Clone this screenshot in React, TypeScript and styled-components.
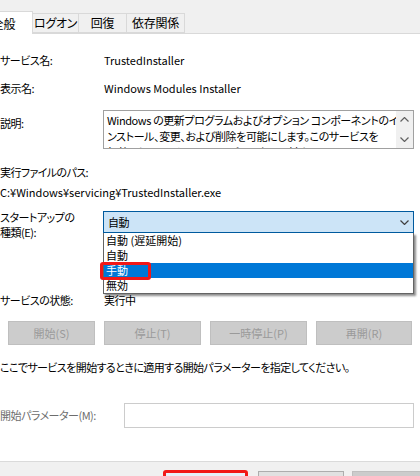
import React from "react";
import styled, { createGlobalStyle } from "styled-components";

const GlobalStyle = createGlobalStyle`
  html, body {
    margin: 0;
    padding: 0;
    background: #fff;
  }
  body {
    width: 420px;
    height: 476px;
    overflow: hidden;
    font-family: "Noto Sans CJK JP", "Noto Sans", sans-serif;
    font-size: 11px;
    letter-spacing: -0.5px;
    color: #000;
    font-feature-settings: "palt";
  }
`;

const Dialog = styled.div`
  width: 420px;
  height: 476px;
  display: flex;
  flex-direction: column;
  overflow: hidden;
`;

const TabStrip = styled.div`
  height: 33px;
  flex: 0 0 auto;
  display: flex;
  align-items: flex-end;
  background: #f0f0f0;
  border-bottom: 1px solid #d9d9d9;
`;

const Tab = styled.div<{ $w: number; $active?: boolean }>`
  box-sizing: border-box;
  width: ${(p) => p.$w}px;
  height: ${(p) => (p.$active ? 23 : 20)}px;
  margin-bottom: ${(p) => (p.$active ? -1 : 0)}px;
  margin-left: ${(p) => (p.$active ? -26 : -1)}px;
  border: 1px solid #d9d9d9;
  border-bottom: ${(p) => (p.$active ? "none" : "1px solid #d9d9d9")};
  background: ${(p) => (p.$active ? "#fff" : "#f0f0f0")};
  position: relative;
  z-index: ${(p) => (p.$active ? 1 : 0)};
  display: flex;
  align-items: center;
  justify-content: center;
  line-height: 16px;
  padding-top: ${(p) => (p.$active ? 1 : 0)}px;
  font-size: 12px;
  letter-spacing: -0.3px;
  white-space: nowrap;
`;

const Content = styled.div`
  flex: 1;
  display: flex;
  flex-direction: column;
`;

const Row = styled.div<{ $mt: number }>`
  display: flex;
  align-items: flex-start;
  margin-top: ${(p) => p.$mt}px;
  position: relative;
`;

const Label = styled.div<{ $w?: number; $mt?: number; $muted?: boolean }>`
  width: ${(p) => p.$w ?? 103}px;
  flex-shrink: 0;
  margin-top: ${(p) => p.$mt ?? 0}px;
  line-height: 16px;
  white-space: nowrap;
  color: ${(p) => (p.$muted ? "#6d6d6d" : "#000")};
`;

const TwoLineLabel = styled(Label)`
  line-height: 15px;
`;

const Value = styled.div<{ $latin?: boolean }>`
  padding-left: 1px;
  line-height: 16px;
  white-space: nowrap;
  letter-spacing: ${(p) => (p.$latin ? 0 : -0.5)}px;
`;

const Line = styled.div<{ $mt: number; $latin?: boolean }>`
  margin-top: ${(p) => p.$mt}px;
  line-height: 16px;
  white-space: nowrap;
  letter-spacing: ${(p) => (p.$latin ? 0 : -0.6)}px;
`;

const DescBox = styled.div`
  box-sizing: border-box;
  width: 311px;
  height: 39px;
  border: 1px solid #a0a0a0;
  display: flex;
  overflow: hidden;
`;

const DescText = styled.div`
  flex: 1;
  padding: 1px 0 0 3px;
  line-height: 16px;
  letter-spacing: -0.4px;
  white-space: nowrap;
  overflow: hidden;
`;

const ScrollBar = styled.div`
  width: 17px;
  flex-shrink: 0;
  background: #f0f0f0;
  display: flex;
  flex-direction: column;
  justify-content: space-between;
`;

const ScrollArrow = styled.div`
  height: 17px;
  display: flex;
  align-items: center;
  justify-content: center;
`;

const SelectWrap = styled.div`
  position: relative;
  margin-top: 1px;
`;

const Select = styled.div`
  box-sizing: border-box;
  width: 311px;
  height: 22px;
  border: 1px solid #005a9e;
  background: #cce4f7;
  display: flex;
  align-items: center;
  justify-content: space-between;
  padding: 0 4px 0 4px;
  line-height: 20px;
`;

const DropList = styled.div`
  position: absolute;
  top: 22px;
  left: 0;
  z-index: 5;
  box-sizing: border-box;
  width: 311px;
  border: 1px solid #646464;
  border-top: none;
  background: #fff;
  box-shadow: 2px 2px 2px rgba(0, 0, 0, 0.45);
`;

const Option = styled.div<{ $selected?: boolean }>`
  position: relative;
  height: 15px;
  line-height: 15px;
  padding-left: 2px;
  letter-spacing: 0;
  white-space: nowrap;
  background: ${(p) => (p.$selected ? "#0078d7" : "transparent")};
  color: ${(p) => (p.$selected ? "#fff" : "#000")};
`;

const Marker = styled.div`
  position: absolute;
  left: -4px;
  top: -1px;
  width: 51px;
  height: 18px;
  box-sizing: border-box;
  border: 3px solid #f21818;
  border-radius: 3px;
`;

const ButtonRow = styled.div`
  display: flex;
  margin-top: 13px;
  margin-left: 8px;
  gap: 9px;
`;

const ServiceButton = styled.div<{ $w: number }>`
  box-sizing: border-box;
  width: ${(p) => p.$w}px;
  height: 24px;
  border: 1px solid #bfbfbf;
  background: #cccccc;
  color: #9a9a9a;
  display: flex;
  align-items: center;
  justify-content: center;
  letter-spacing: 0;
  white-space: nowrap;
`;

const ParamInput = styled.div`
  box-sizing: border-box;
  width: 290px;
  height: 25px;
  border: 1px solid #cccccc;
  background: #fff;
`;

const Footer = styled.div`
  flex: 0 0 15px;
  box-sizing: border-box;
  border-top: 1px solid #dadada;
  background: #f0f0f0;
  display: flex;
  align-items: flex-start;
  padding: 8px 0 0 163px;
  overflow: hidden;
`;

const FooterButton = styled.div<{ $variant: "marked" | "normal" | "disabled" }>`
  box-sizing: border-box;
  flex-shrink: 0;
  height: 28px;
  width: ${(p) => (p.$variant === "marked" ? 85 : 86)}px;
  margin-left: ${(p) =>
    p.$variant === "marked" ? 0 : p.$variant === "normal" ? 10 : 8}px;
  margin-top: ${(p) => (p.$variant === "marked" ? 0 : 1)}px;
  border: ${(p) =>
    p.$variant === "marked"
      ? "3px solid #f21818"
      : p.$variant === "normal"
      ? "1px solid #adadad"
      : "1px solid #bfbfbf"};
  border-radius: ${(p) => (p.$variant === "marked" ? 3 : 0)}px;
  background: ${(p) =>
    p.$variant === "disabled" ? "#cccccc" : p.$variant === "normal" ? "#e1e1e1" : "#e5f1fb"};
`;

const Chevron: React.FC<{ up?: boolean; color?: string }> = ({ up, color = "#606060" }) => (
  <svg width="9" height="5" viewBox="0 0 9 5">
    <polyline
      points={up ? "0.5,4.5 4.5,0.5 8.5,4.5" : "0.5,0.5 4.5,4.5 8.5,0.5"}
      fill="none"
      stroke={color}
      strokeWidth="1.2"
    />
  </svg>
);

const startupTypes = ["自動 (遅延開始)", "自動", "手動", "無効"];

const App: React.FC = () => {
  return (
    <>
      <GlobalStyle />
      <Dialog>
        <TabStrip>
          <Tab $w={59} $active>
            全般
          </Tab>
          <Tab $w={47}>ログオン</Tab>
          <Tab $w={49}>回復</Tab>
          <Tab $w={59}>依存関係</Tab>
        </TabStrip>

        <Content>
          <Row $mt={18}>
            <Label>サービス名:</Label>
            <Value $latin>TrustedInstaller</Value>
          </Row>
          <Row $mt={12}>
            <Label>表示名:</Label>
            <Value $latin>Windows Modules Installer</Value>
          </Row>
          <Row $mt={14}>
            <Label $mt={5}>説明:</Label>
            <DescBox>
              <DescText>
                Windows の更新プログラムおよびオプション コンポーネントのイ
                <br />
                ンストール、変更、および削除を可能にします。このサービスを
                <br />
                無効にしていると、このコンピューターに対する Windows
              </DescText>
              <ScrollBar>
                <ScrollArrow>
                  <Chevron up />
                </ScrollArrow>
                <ScrollArrow>
                  <Chevron />
                </ScrollArrow>
              </ScrollBar>
            </DescBox>
          </Row>
          <Line $mt={15}>実行ファイルのパス:</Line>
          <Line $mt={4} $latin>
            C:¥Windows¥servicing¥TrustedInstaller.exe
          </Line>

          <Row $mt={10}>
            <TwoLineLabel>
              スタートアップの
              <br />
              種類(E):
            </TwoLineLabel>
            <SelectWrap>
              <Select>
                <span>自動</span>
                <Chevron color="#404040" />
              </Select>
              <DropList>
                {startupTypes.map((t) => (
                  <Option key={t} $selected={t === "手動"}>
                    {t}
                    {t === "手動" && <Marker />}
                  </Option>
                ))}
              </DropList>
            </SelectWrap>
          </Row>

          <Row $mt={52}>
            <Label>サービスの状態:</Label>
            <Value>実行中</Value>
          </Row>

          <ButtonRow>
            <ServiceButton $w={87}>開始(S)</ServiceButton>
            <ServiceButton $w={97}>停止(T)</ServiceButton>
            <ServiceButton $w={97}>一時停止(P)</ServiceButton>
            <ServiceButton $w={96}>再開(R)</ServiceButton>
          </ButtonRow>

          <Line $mt={14}>
            ここでサービスを開始するときに適用する開始パラメーターを指定してください。
          </Line>

          <Row $mt={28}>
            <Label $w={124} $mt={4} $muted>
              開始パラメーター(M):
            </Label>
            <ParamInput />
          </Row>
        </Content>

        <Footer>
          <FooterButton $variant="marked" />
          <FooterButton $variant="normal" />
          <FooterButton $variant="disabled" />
        </Footer>
      </Dialog>
    </>
  );
};

export default App;
